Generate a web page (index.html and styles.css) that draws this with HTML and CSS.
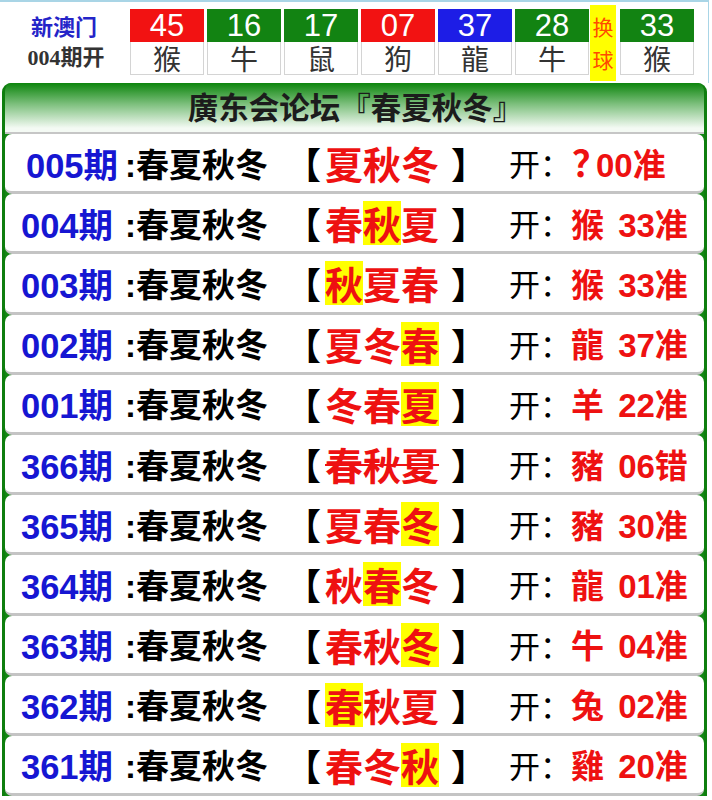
FILE: index.html
```html
<!DOCTYPE html>
<html lang="zh">
<head>
<meta charset="utf-8">
<title>廣东会论坛</title>
<link rel="stylesheet" href="styles.css">
</head>
<body>
<div class="head">
  <div class="brand">
    <div class="brand-name">新澳门</div>
    <div class="brand-no">004期开</div>
  </div>
  <div class="balls">
    <div class="ball"><div class="num red">45</div><div class="zod">猴</div></div>
    <div class="ball"><div class="num green">16</div><div class="zod">牛</div></div>
    <div class="ball"><div class="num green">17</div><div class="zod">鼠</div></div>
    <div class="ball"><div class="num red">07</div><div class="zod">狗</div></div>
    <div class="ball"><div class="num blue">37</div><div class="zod">龍</div></div>
    <div class="ball"><div class="num green">28</div><div class="zod">牛</div></div>
    <div class="swap"><span>换</span><span>球</span></div>
    <div class="ball"><div class="num green">33</div><div class="zod">猴</div></div>
  </div>
</div>

<div class="frame">
  <div class="title">廣东会论坛『春夏秋冬』</div>
  <div class="row first"><span class="no">005期</span><span class="lbl">:春夏秋冬</span><span class="pick">【<b>夏秋冬</b>】</span><span class="open">开：</span><span class="res"><span class="q">？</span>00准</span></div>
  <div class="row"><span class="no">004期</span><span class="lbl">:春夏秋冬</span><span class="pick">【<b>春<i class="hl">秋</i>夏</b>】</span><span class="open">开：</span><span class="res">猴 33准</span></div>
  <div class="row"><span class="no">003期</span><span class="lbl">:春夏秋冬</span><span class="pick">【<b><i class="hl">秋</i>夏春</b>】</span><span class="open">开：</span><span class="res">猴 33准</span></div>
  <div class="row"><span class="no">002期</span><span class="lbl">:春夏秋冬</span><span class="pick">【<b>夏冬<i class="hl">春</i></b>】</span><span class="open">开：</span><span class="res">龍 37准</span></div>
  <div class="row"><span class="no">001期</span><span class="lbl">:春夏秋冬</span><span class="pick">【<b>冬春<i class="hl">夏</i></b>】</span><span class="open">开：</span><span class="res">羊 22准</span></div>
  <div class="row"><span class="no">366期</span><span class="lbl">:春夏秋冬</span><span class="pick">【<b class="miss">春秋夏</b>】</span><span class="open">开：</span><span class="res">豬 06错</span></div>
  <div class="row"><span class="no">365期</span><span class="lbl">:春夏秋冬</span><span class="pick">【<b>夏春<i class="hl">冬</i></b>】</span><span class="open">开：</span><span class="res">豬 30准</span></div>
  <div class="row"><span class="no">364期</span><span class="lbl">:春夏秋冬</span><span class="pick">【<b>秋<i class="hl">春</i>冬</b>】</span><span class="open">开：</span><span class="res">龍 01准</span></div>
  <div class="row"><span class="no">363期</span><span class="lbl">:春夏秋冬</span><span class="pick">【<b>春秋<i class="hl">冬</i></b>】</span><span class="open">开：</span><span class="res">牛 04准</span></div>
  <div class="row"><span class="no">362期</span><span class="lbl">:春夏秋冬</span><span class="pick">【<b><i class="hl">春</i>秋夏</b>】</span><span class="open">开：</span><span class="res">兔 02准</span></div>
  <div class="row"><span class="no">361期</span><span class="lbl">:春夏秋冬</span><span class="pick">【<b>春冬<i class="hl">秋</i></b>】</span><span class="open">开：</span><span class="res">雞 20准</span></div>
</div>
</body>
</html>
```

FILE: styles.css
```css
* { box-sizing: border-box; }
html, body { margin: 0; padding: 0; background: #fff; }
body {
  width: 712px;
  font-family: "Liberation Sans", "Noto Sans CJK SC", sans-serif;
  overflow: hidden;
}

.head {
  width: 709px;
  height: 83px;
  border-top: 2px solid #a9d5e6;
  border-right: 1px solid #a9d5e6;
  display: flex;
  align-items: flex-start;
}
.brand {
  width: 130px;
  padding-top: 8px;
  display: flex;
  flex-direction: column;
  align-items: center;
  padding-right: 2px;
}
.brand-name {
  font-family: "Noto Sans CJK SC", sans-serif;
  font-weight: 700;
  font-size: 22px;
  line-height: 30px;
  color: #2424c8;
}
.brand-no {
  margin-top: 4px;
  font-family: "Liberation Serif", "Noto Sans CJK SC", serif;
  font-weight: 700;
  font-size: 22px;
  line-height: 28px;
  color: #333;
  padding-left: 4px;
}
.balls {
  display: flex;
  align-items: flex-start;
  gap: 3px;
  padding-top: 7px;
}
.ball { width: 74px; }
.num {
  height: 33px;
  color: #fff;
  font-size: 31px;
  line-height: 34px;
  text-align: center;
}
.red { background: #f21212; }
.green { background: #128312; }
.blue { background: #1d1de6; }
.zod {
  height: 33px;
  border: 1px solid #d4d4d4;
  border-top: none;
  background: #fff;
  font-family: "Noto Sans CJK SC", sans-serif;
  font-size: 28px;
  line-height: 32px;
  text-align: center;
  color: #333;
}
.swap {
  width: 26px;
  height: 76px;
  margin-top: -4px;
  margin-left: -2px;
  margin-right: 1px;
  background: #ffff00;
  color: #ff4a00;
  font-family: "Noto Sans CJK SC", sans-serif;
  font-size: 21px;
  line-height: 33px;
  text-align: center;
  padding-top: 5px;
  display: flex;
  flex-direction: column;
  align-items: center;
}
.swap span { display: block; height: 33px; }

.frame {
  margin-left: 2px;
  width: 705px;
  background: #138613;
  border-left: 3px solid #0e7e0e;
  border-right: 3px solid #0e7e0e;
  border-radius: 9px 9px 0 0;
  overflow: hidden;
}
.title {
  height: 51px;
  background: linear-gradient(#0d850d 0%, #82c282 45%, #f4faf4 92%);
  border-bottom: 2px solid #c6c6c6;
  text-align: center;
  font-family: "Noto Sans CJK SC", sans-serif;
  font-weight: 700;
  font-size: 30.5px;
  line-height: 46px;
  color: #1c1c1c;
  padding-left: 2px;
}
.row {
  height: 60.2px;
  background: #fff;
  border-bottom: 3px solid #c4c4c4;
  border-radius: 7px;
  display: flex;
  align-items: center;
  padding-left: 16px;
  white-space: nowrap;
}
.row.first { padding-left: 21px; }
.first .no { width: 99px; }
.no {
  width: 104px;
  color: #1616d2;
  font-weight: 700;
  font-size: 34.5px;
}
.lbl {
  width: 160px;
  color: #000;
  font-family: "Liberation Sans", "Noto Sans CJK SC", sans-serif;
  font-weight: 700;
  font-size: 33px;
}
.pick {
  width: 224px;
  color: #000;
  font-family: "Noto Sans CJK SC", sans-serif;
  font-weight: 700;
  font-size: 36px;
}
.pick b {
  color: #ee1111;
  font-weight: 700;
  font-size: 38px;
  margin-left: 4px;
  margin-right: 12px;
}
.pick .miss { text-decoration: line-through; text-decoration-thickness: 2px; }
.hl {
  font-style: normal;
  background: #ffff00;
  display: inline-block;
  line-height: 44px;
}
.open {
  width: 62px;
  color: #000;
  font-family: "Noto Sans CJK SC", sans-serif;
  font-size: 31px;
}
.res {
  color: #ee1111;
  font-weight: 700;
  font-size: 33px;
  word-spacing: 5px;
}
.res .q {
  display: inline-block;
  width: 24px;
  font-family: "Noto Sans CJK SC", sans-serif;
  font-size: 36px;
  line-height: 40px;
  margin-left: 1px;
}
```
